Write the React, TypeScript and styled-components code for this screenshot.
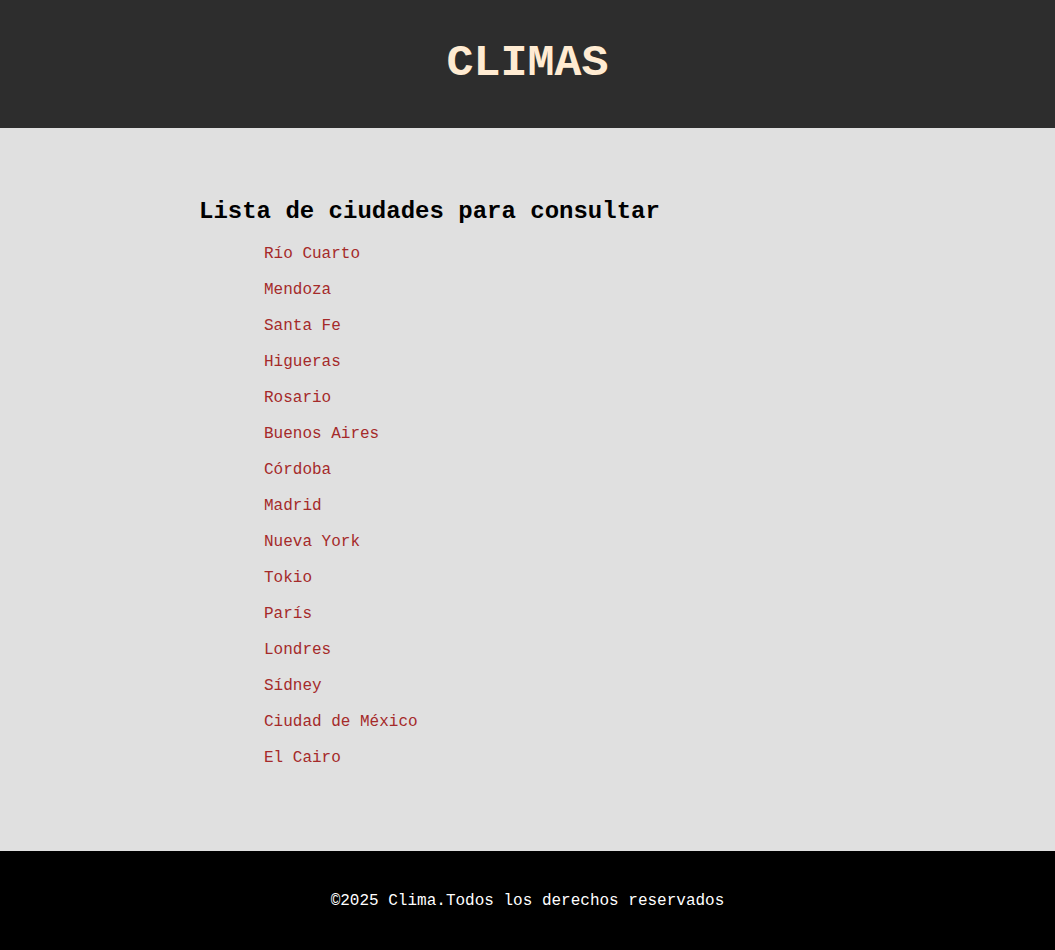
import { FC } from "react";
import styled, { createGlobalStyle } from "styled-components";

const GlobalStyle = createGlobalStyle`
  body {
    margin: 0;
    font-family: "Liberation Mono", "Courier New", monospace;
    background: #e0e0e0;
  }
`;

const Header = styled.header`
  height: 128px;
  background: #2d2d2d;
  display: flex;
  align-items: center;
  justify-content: center;
  h1 {
    margin: 0;
    font-size: 45px;
    font-weight: bold;
    color: #ffebd2;
    line-height: 1;
    padding-bottom: 2px;
  }
`;

const Main = styled.main`
  background: #e0e0e0;
  padding: 70px 0 75px 199px;
  h2 {
    margin: 0 0 11px;
    font-size: 24px;
    line-height: 27px;
    color: #000;
  }
`;

const CityList = styled.ul`
  list-style: none;
  margin: 0;
  padding: 0 0 0 65px;
  li {
    height: 36px;
    line-height: 36px;
    font-size: 16px;
  }
  a {
    color: #a52a2a;
    text-decoration: none;
  }
`;

const Footer = styled.footer`
  height: 99px;
  background: #000;
  color: #fff;
  display: flex;
  align-items: center;
  justify-content: center;
  font-size: 16px;
`;

const cities = [
  "Río Cuarto",
  "Mendoza",
  "Santa Fe",
  "Higueras",
  "Rosario",
  "Buenos Aires",
  "Córdoba",
  "Madrid",
  "Nueva York",
  "Tokio",
  "París",
  "Londres",
  "Sídney",
  "Ciudad de México",
  "El Cairo",
];

const App: FC = () => {
  return (
    <>
      <GlobalStyle />
      <Header>
        <h1>CLIMAS</h1>
      </Header>
      <Main>
        <h2>Lista de ciudades para consultar</h2>
        <CityList>
          {cities.map((c) => (
            <li key={c}>
              <a href="#">{c}</a>
            </li>
          ))}
        </CityList>
      </Main>
      <Footer>©2025 Clima.Todos los derechos reservados</Footer>
    </>
  );
};

export default App;
